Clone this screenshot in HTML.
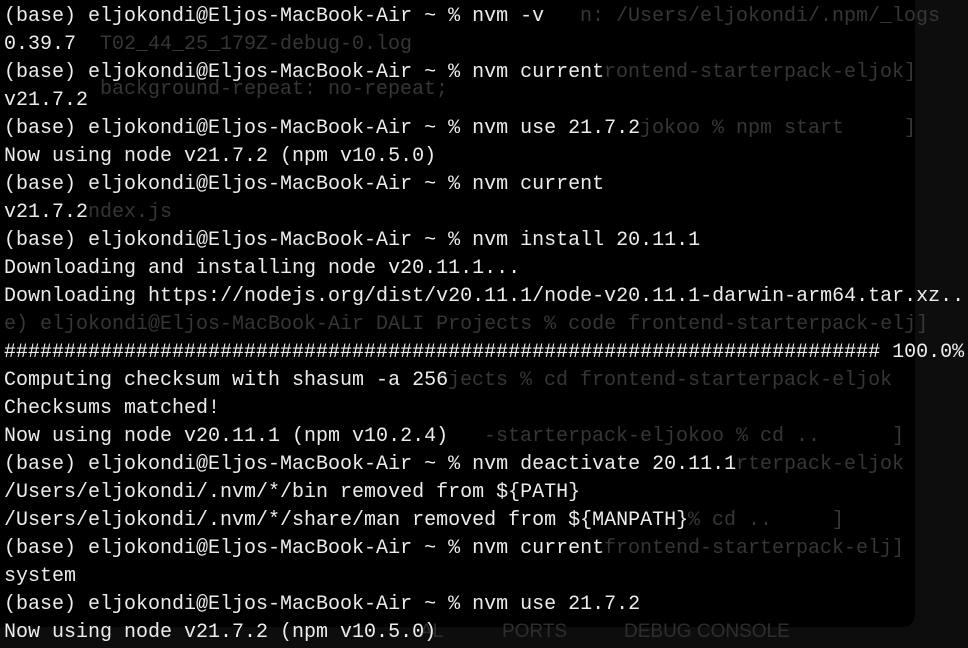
<!DOCTYPE html>
<html><head><meta charset="utf-8"><style>
html,body{margin:0;padding:0;background:#000;width:968px;height:648px;overflow:hidden}
body{position:relative;font-family:"Liberation Mono",monospace;font-size:20px}
.side{position:absolute;left:915px;top:0;width:53px;height:648px;background:#0d0d0d}
.bot{position:absolute;left:0;top:600px;width:968px;height:48px;background:#0d0d0d}
.win{position:absolute;left:0;top:0;width:915px;height:627px;background:#000;border-bottom-right-radius:12px}
.g{position:absolute;color:#363636;white-space:pre;line-height:28px}
.t{position:absolute;left:4px;top:3px;color:#ececec;white-space:pre;line-height:28px}
.s{position:absolute;font-family:"Liberation Sans",sans-serif;color:#2e2e2e;font-size:19px;top:621px}
</style></head><body>
<div class="side"></div><div class="bot"></div><div class="win"></div>
<div class="s" style="left:420px">AL</div>
<div class="s" style="left:502px">PORTS</div>
<div class="s" style="left:624px">DEBUG CONSOLE</div>
<div class="g" style="left:580px;top:3px">n: /Users/eljokondi/.npm/_logs</div>
<div class="g" style="left:100px;top:31px">T02_44_25_179Z-debug-0.log</div>
<div class="g" style="left:604px;top:59px">rontend-starterpack-eljok]</div>
<div class="g" style="left:100px;top:76px">background-repeat: no-repeat;</div>
<div class="g" style="left:640px;top:115px">jokoo % npm start     ]</div>
<div class="g" style="left:88px;top:199px">ndex.js</div>
<div class="g" style="left:4px;top:311px">e) eljokondi@Eljos-MacBook-Air DALI Projects % code frontend-starterpack-elj]</div>
<div class="g" style="left:436px;top:367px">ojects % cd frontend-starterpack-eljok</div>
<div class="g" style="left:484px;top:423px">-starterpack-eljokoo % cd ..      ]</div>
<div class="g" style="left:736px;top:451px">rterpack-eljok</div>
<div class="g" style="left:688px;top:507px">% cd ..     ]</div>
<div class="g" style="left:604px;top:535px">frontend-starterpack-elj]</div>
<div class="t">(base) eljokondi@Eljos-MacBook-Air ~ % nvm -v
0.39.7
(base) eljokondi@Eljos-MacBook-Air ~ % nvm current
v21.7.2
(base) eljokondi@Eljos-MacBook-Air ~ % nvm use 21.7.2
Now using node v21.7.2 (npm v10.5.0)
(base) eljokondi@Eljos-MacBook-Air ~ % nvm current
v21.7.2
(base) eljokondi@Eljos-MacBook-Air ~ % nvm install 20.11.1
Downloading and installing node v20.11.1...
Downloading https://nodejs.org/dist/v20.11.1/node-v20.11.1-darwin-arm64.tar.xz..

######################################################################### 100.0%
Computing checksum with shasum -a 256
Checksums matched!
Now using node v20.11.1 (npm v10.2.4)
(base) eljokondi@Eljos-MacBook-Air ~ % nvm deactivate 20.11.1
/Users/eljokondi/.nvm/*/bin removed from ${PATH}
/Users/eljokondi/.nvm/*/share/man removed from ${MANPATH}
(base) eljokondi@Eljos-MacBook-Air ~ % nvm current
system
(base) eljokondi@Eljos-MacBook-Air ~ % nvm use 21.7.2
Now using node v21.7.2 (npm v10.5.0)</div>
</body></html>
